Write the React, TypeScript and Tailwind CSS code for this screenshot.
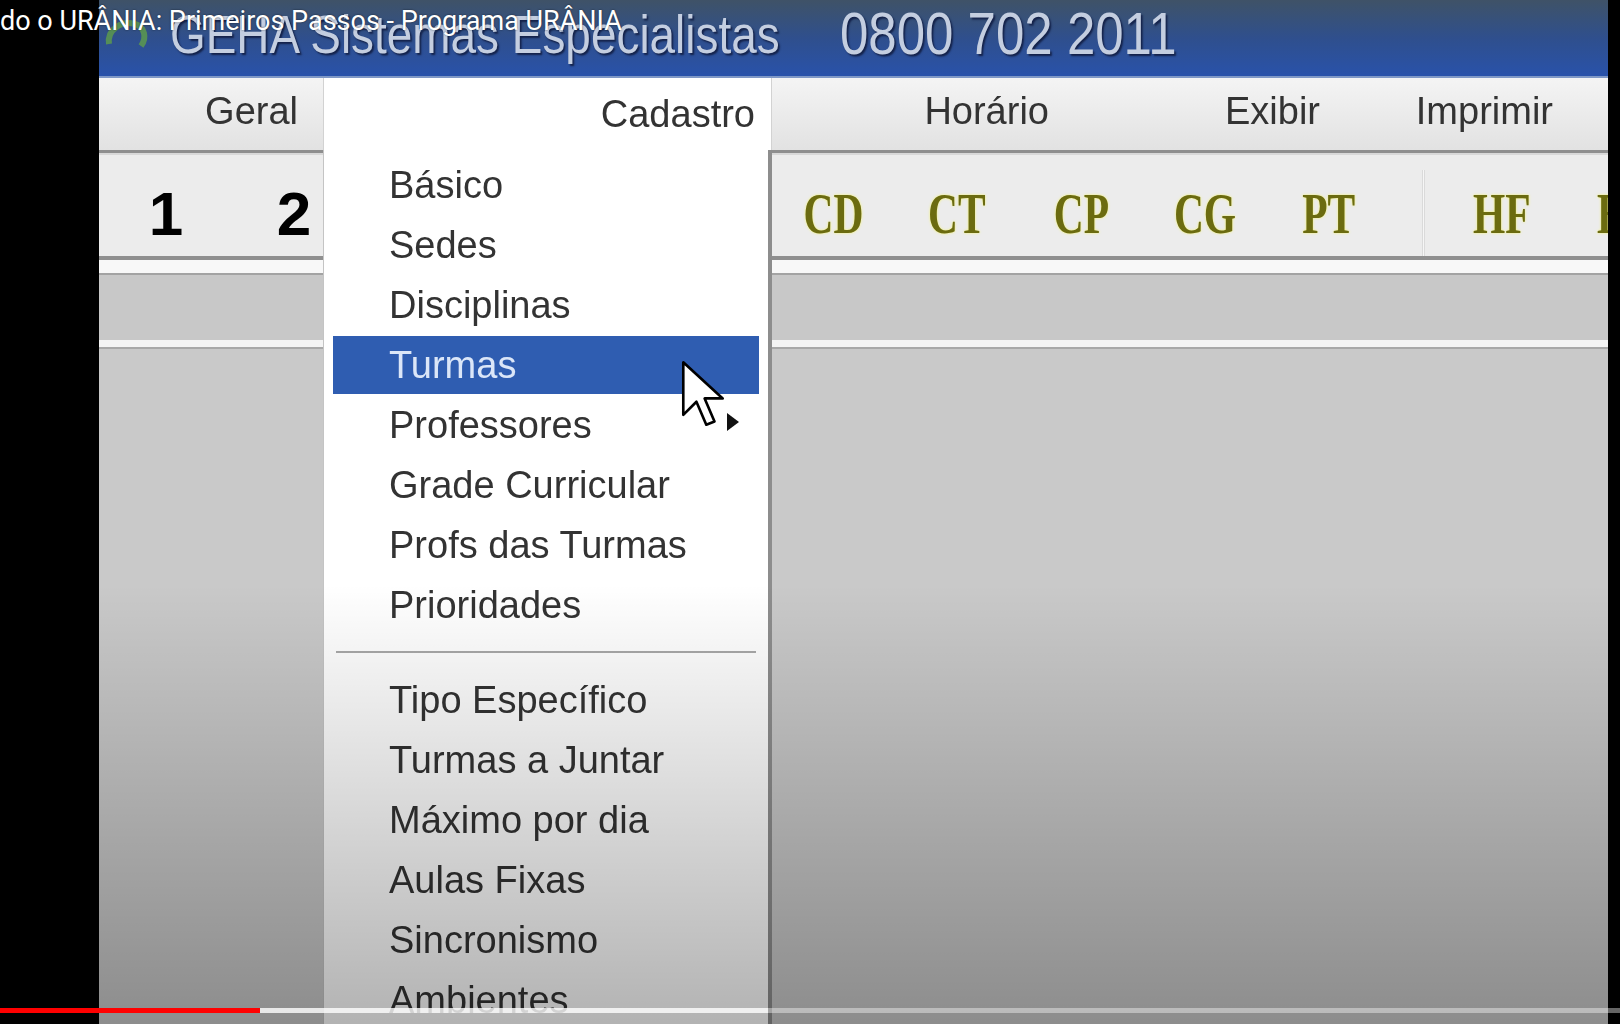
import React from "react";

const topItems = [
  "Básico",
  "Sedes",
  "Disciplinas",
  "Turmas",
  "Professores",
  "Grade Curricular",
  "Profs das Turmas",
  "Prioridades",
];

const bottomItems = [
  "Tipo Específico",
  "Turmas a Juntar",
  "Máximo por dia",
  "Aulas Fixas",
  "Sincronismo",
  "Ambientes",
];

const tools = ["CD", "CT", "CP", "CG", "PT"];

function MenuRow({ label, active }: { label: string; active?: boolean }) {
  if (active) {
    return (
      <div className="flex h-[60px] items-center py-[1px]">
        <div className="mx-[9px] flex h-[58px] flex-1 items-center bg-[#2f5db1] pl-[56px] text-[#dbe6f8]">
          {label}
        </div>
      </div>
    );
  }
  return (
    <div className="flex h-[60px] items-center pl-[65px] text-[#333]">
      {label}
    </div>
  );
}

function TitleBar() {
  return (
    <div className="relative flex h-[78px] shrink-0 items-center border-b-2 border-[#7f98c6] bg-linear-to-b from-[#3f5267] via-[#2f4f8d] to-[#2952aa] pb-[8px]">
      <svg
        className="absolute left-[4px] top-[14px]"
        width="46"
        height="40"
        viewBox="0 0 46 40"
      >
        <path
          d="M6 30 C4 16 18 6 32 10 C42 13 44 24 38 32"
          fill="none"
          stroke="#5f9e4a"
          strokeWidth="6"
          opacity="0.8"
        />
      </svg>
      <div className="ml-[71px] w-[670px] shrink-0">
        <span className="inline-block origin-left scale-x-[0.85] whitespace-nowrap text-[54px] leading-none text-[#c4cee0] [text-shadow:2px_2px_2px_#14224a]">
          GEHA Sistemas Especialistas
        </span>
      </div>
      <span className="inline-block shrink-0 origin-left scale-x-[0.85] whitespace-nowrap text-[60px] leading-none text-[#c4cee0] [text-shadow:2px_2px_2px_#14224a]">
        0800 702 2011
      </span>
    </div>
  );
}

function MenuBar() {
  return (
    <div className="flex h-[72px] shrink-0 bg-linear-to-b from-[#f4f4f4] to-[#e2e2e2] text-[38px] leading-none text-[#333]">
      <div className="flex w-[224px] shrink-0 items-center justify-end pb-[6px] pr-[25px]">
        Geral
      </div>
      <div className="flex w-[449px] shrink-0 items-center justify-end border-x border-[#d2d2d2] bg-white pb-[1px] pr-[16px]">
        Cadastro
      </div>
      <div className="flex w-[277px] shrink-0 items-center justify-end pb-[6px]">
        Horário
      </div>
      <div className="flex w-[271px] shrink-0 items-center justify-end pb-[6px]">
        Exibir
      </div>
      <div className="flex w-[233px] shrink-0 items-center justify-end pb-[6px]">
        Imprimir
      </div>
    </div>
  );
}

function ToolLetters({ text }: { text: string }) {
  return (
    <span className="inline-block scale-x-[0.74] font-['Liberation_Serif',serif] text-[56px] font-bold leading-none text-[#6b6b10] [text-shadow:0_0_3px_#f4f46a]">
      {text}
    </span>
  );
}

function Toolbar() {
  return (
    <div className="flex h-[101px] shrink-0 items-center overflow-hidden bg-[#ececec] pt-[16px]">
      <div className="ml-[3px] w-[128px] shrink-0 text-center text-[62px] font-bold leading-none text-black">
        1
      </div>
      <div className="w-[128px] shrink-0 text-center text-[62px] font-bold leading-none text-black">
        2
      </div>
      <div className="w-[413px] shrink-0" />
      {tools.map((t) => (
        <div key={t} className="w-[124px] shrink-0 text-center">
          <ToolLetters text={t} />
        </div>
      ))}
      <div className="flex h-[86px] w-[49px] shrink-0 justify-end self-end pr-[15px]">
        <div className="h-full w-[3px] border-x border-[#dadada] bg-[#f6f6f6]" />
      </div>
      <div className="w-[124px] shrink-0 text-center">
        <ToolLetters text="HF" />
      </div>
      <div className="ml-[33px] shrink-0">
        <span className="inline-block origin-left scale-x-[0.74] font-['Liberation_Serif',serif] text-[56px] font-bold leading-none text-[#6b6b10] [text-shadow:0_0_3px_#f4f46a]">
          HC
        </span>
      </div>
    </div>
  );
}

function Dropdown() {
  return (
    <div className="absolute bottom-0 left-[224px] top-[150px] w-[449px] border-l border-[#c4c4c4] border-r-[4px] border-r-[#8d8d8d] bg-white pt-[5px] text-[38px] leading-none">
      {topItems.map((item) => (
        <MenuRow key={item} label={item} active={item === "Turmas"} />
      ))}
      <div className="flex h-[35px] flex-col justify-center px-[12px]">
        <div className="h-[3px] border-b border-white bg-[#a9a9a9]" />
      </div>
      {bottomItems.map((item) => (
        <MenuRow key={item} label={item} />
      ))}
    </div>
  );
}

export default function App() {
  return (
    <div className="relative flex h-[1024px] w-[1620px] overflow-hidden bg-black font-['Liberation_Sans',sans-serif]">
      <div className="w-[99px] shrink-0 bg-black" />
      <main className="relative flex w-[1509px] shrink-0 flex-col overflow-hidden bg-[#c9c9c9] blur-[0.5px]">
        <TitleBar />
        <MenuBar />
        <div className="h-[5px] shrink-0 border-t-[3px] border-[#8e8e8e] bg-[#d8d8d8]" />
        <Toolbar />
        <div className="h-[4px] shrink-0 bg-[#8f8f8f]" />
        <div className="h-[13px] shrink-0 bg-[#f8f8f8]" />
        <div className="h-[67px] shrink-0 border-t-2 border-[#a3a3a3] bg-[#c8c8c8]" />
        <div className="h-[9px] shrink-0 border-b-2 border-[#a8a8a8] bg-[#f4f4f4]" />
        <div className="flex-1 bg-[#c9c9c9]" />

        <Dropdown />

        <svg
          className="absolute left-[628px] top-[413px]"
          width="13"
          height="18"
          viewBox="0 0 13 18"
        >
          <polygon points="0,0 12,9 0,18" fill="#111" />
        </svg>

        <svg
          className="absolute left-[581px] top-[359px]"
          width="46"
          height="69"
          viewBox="0 0 14 21"
        >
          <path
            d="M1 1 V17 L5 13 L8 20 L10.5 19 L7.5 12 L13 12 Z"
            fill="#fff"
            stroke="#000"
            strokeWidth="0.8"
            strokeLinejoin="round"
          />
        </svg>
      </main>
      <div className="w-[12px] shrink-0 bg-black" />

      <div className="pointer-events-none absolute inset-x-0 bottom-0 h-[440px] bg-linear-to-b from-transparent to-black/30" />

      <div className="absolute left-0 top-[8px] whitespace-nowrap font-['Roboto',sans-serif] text-[27px] leading-none text-white [text-shadow:0_0_2px_rgba(0,0,0,0.6)]">
        do o URÂNIA: Primeiros Passos - Programa URÂNIA
      </div>

      <div className="absolute inset-x-0 top-[1008px] flex h-[5px]">
        <div className="w-[260px] bg-[#ff0000]" />
        <div className="w-[508px] bg-white/80" />
        <div className="flex-1 bg-white/40" />
      </div>
    </div>
  );
}
